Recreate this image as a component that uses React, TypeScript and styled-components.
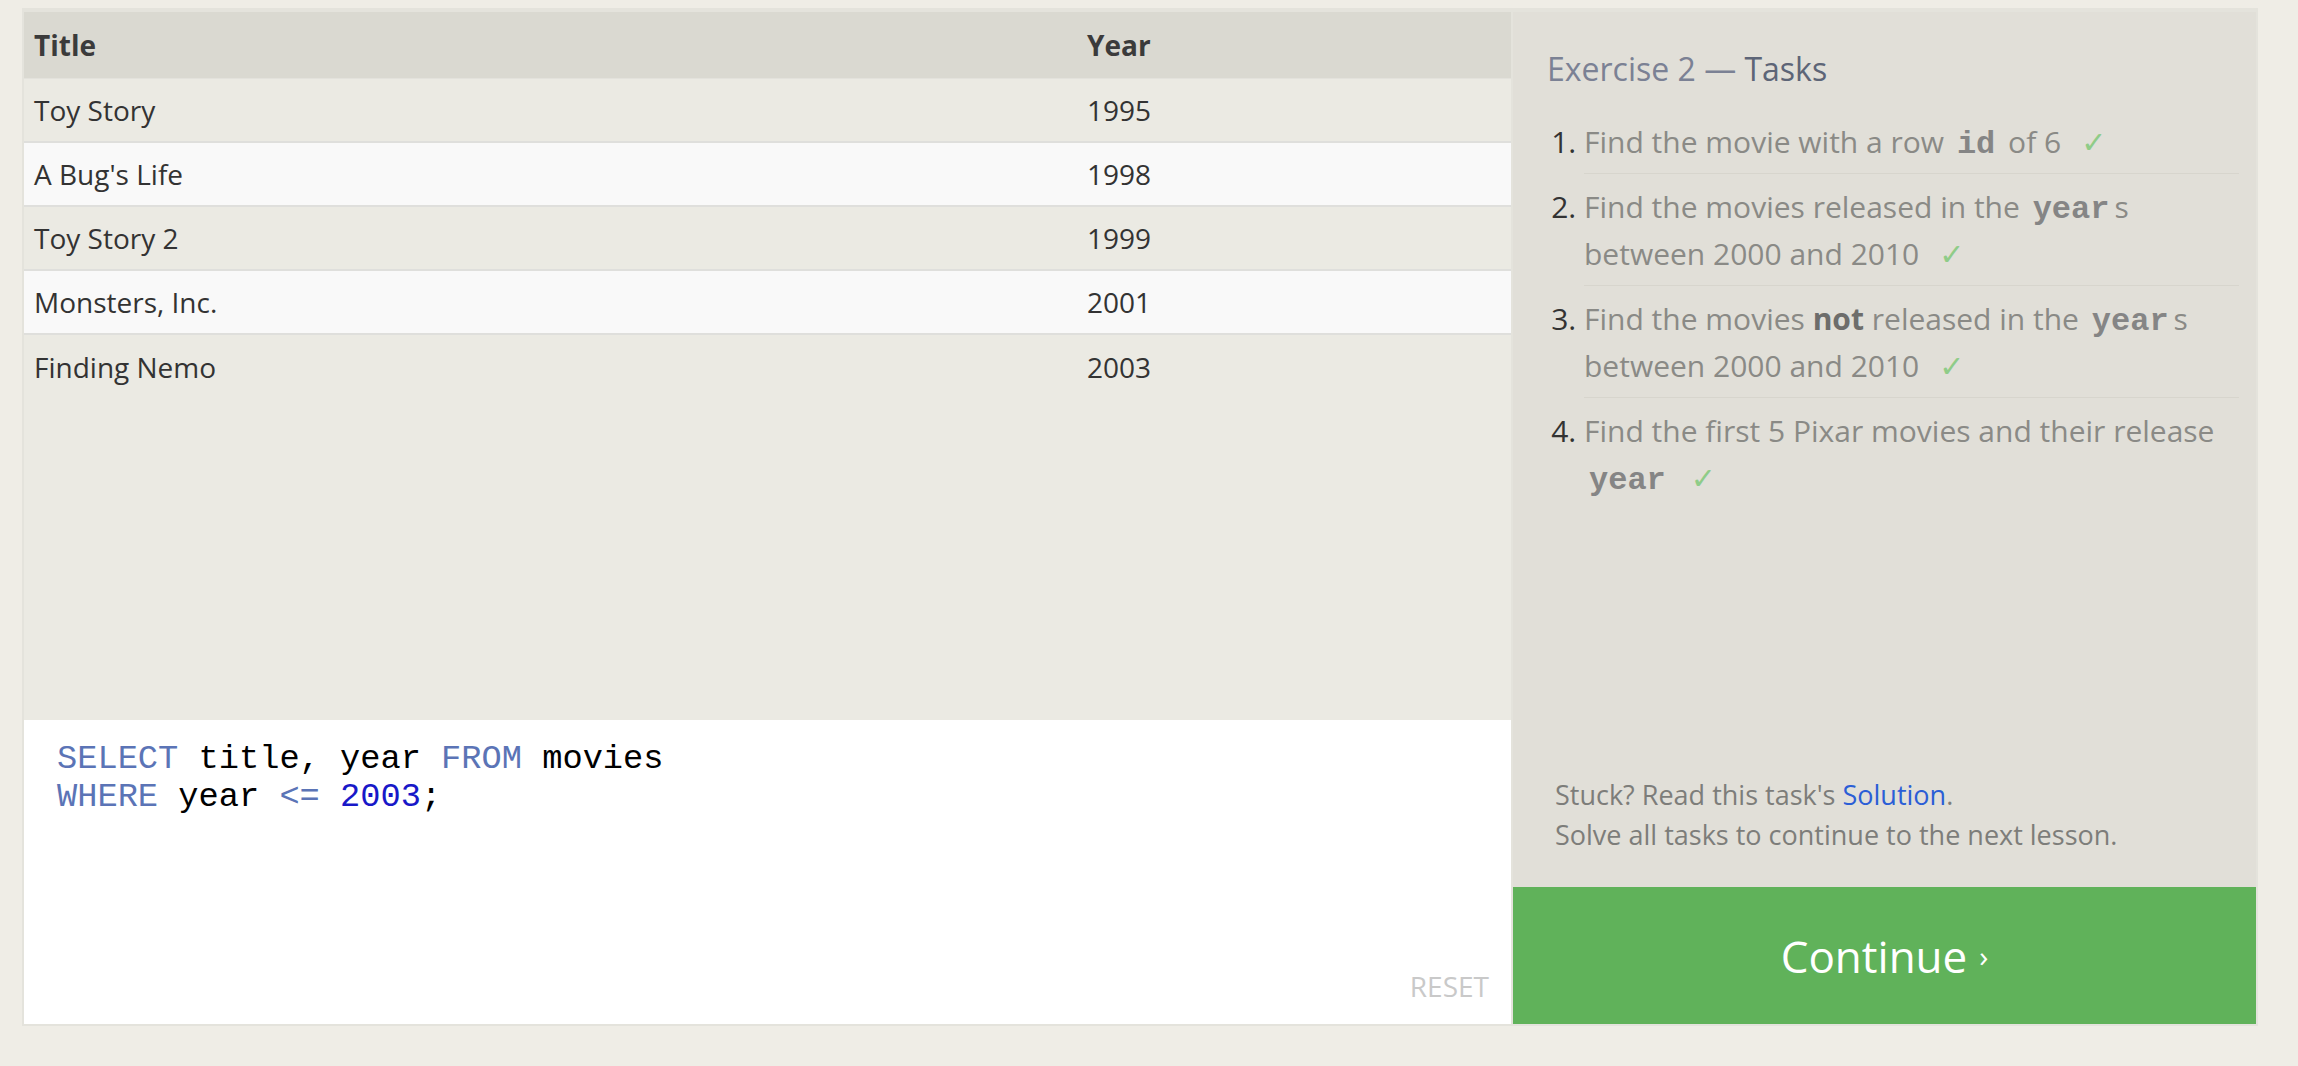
import styled, { createGlobalStyle } from "styled-components";

const GlobalStyle = createGlobalStyle`
  * {
    box-sizing: border-box;
  }
  body {
    margin: 0;
    background: #efede6;
    font-family: "Open Sans", "Liberation Sans", sans-serif;
  }
`;

interface IMovie {
  title: string;
  year: number;
}

const movies: IMovie[] = [
  { title: "Toy Story", year: 1995 },
  { title: "A Bug's Life", year: 1998 },
  { title: "Toy Story 2", year: 1999 },
  { title: "Monsters, Inc.", year: 2001 },
  { title: "Finding Nemo", year: 2003 },
];

const Frame = styled.div`
  margin: 8px 40px 0 22px;
  height: 1018px;
  display: grid;
  grid-template-columns: 1487px 743px;
  gap: 2px;
  border: 2px solid #e4e3dc;
  border-top-width: 4px;
  background: #e4e3dc;
`;

const LeftColumn = styled.div`
  display: grid;
  grid-template-rows: 708px 1fr;
  min-height: 0;
`;

const Results = styled.div`
  background: #ebeae3;
`;

const TableRow = styled.div<{ $head?: boolean; $alt?: boolean }>`
  display: grid;
  grid-template-columns: 1053px 1fr;
  align-items: center;
  height: ${(p) => (p.$head ? "67px" : "64px")};
  background: ${(p) => (p.$head ? "#dad9d1" : p.$alt ? "#f9f9f9" : "#ebeae3")};
  border-bottom: ${(p) => (p.$head ? "1px solid #e3e2dc" : "2px solid #dfdfdc")};
  font-size: 28px;
  font-weight: ${(p) => (p.$head ? 700 : 400)};
  color: ${(p) => (p.$head ? "#3b3b3b" : "#333")};

  &:last-child {
    border-bottom: none;
  }
`;

const Cell = styled.div`
  padding: 0 10px;
  white-space: nowrap;
`;

const Editor = styled.div`
  background: #fff;
  display: flex;
  flex-direction: column;
  padding: 20px 22px 24px 33px;
`;

const Code = styled.pre`
  flex: 1;
  margin: 0;
  font-family: "Liberation Mono", "DejaVu Sans Mono", monospace;
  font-size: 33.7px;
  line-height: 38px;
  color: #000;
`;

const Keyword = styled.span`
  color: #5b74b6;
`;

const Num = styled.span`
  color: #1818c8;
`;

const ResetButton = styled.button`
  align-self: flex-end;
  border: none;
  background: none;
  padding: 0;
  font-family: inherit;
  font-size: 28px;
  line-height: 28px;
  color: #c9c9c9;
`;

const RightColumn = styled.div`
  display: flex;
  flex-direction: column;
  background: #e1dfd8;
  min-height: 0;
`;

const Lesson = styled.div`
  flex: 1;
  display: flex;
  flex-direction: column;
  padding: 35px 17px 0 34px;
`;

const Heading = styled.h2`
  margin: 0;
  font-size: 32px;
  font-weight: 400;
  line-height: 1.4;
  color: #7b8194;

  span {
    color: #5d6577;
  }
`;

const TaskList = styled.ol`
  margin: 17px 0 0;
  padding: 0 0 0 37px;
`;

const Task = styled.li`
  padding: 9px 0 8px;
  border-bottom: 1px solid #d7d5cd;
  font-size: 30px;
  line-height: 47px;
  color: #8a8a86;

  &::marker {
    color: #333;
  }

  &:last-child {
    border-bottom: none;
  }
`;

const InlineCode = styled.code`
  font-family: "Liberation Mono", "DejaVu Sans Mono", monospace;
  font-weight: 700;
  font-size: 32px;
  line-height: 1;
  margin: 0 5px;
  color: #858585;
`;

const Strong = styled.strong`
  color: #6d6d6b;
`;

const Check = styled.span`
  margin-left: 20px;
  font-family: "DejaVu Sans", sans-serif;
  line-height: 1;
  color: #8fcc88;
`;

const Note = styled.p`
  margin: auto 0 0 8px;
  padding-bottom: 32px;
  font-size: 27px;
  line-height: 40px;
  color: #7d7d7a;

  a {
    color: #2b5ed6;
    text-decoration: none;
  }
`;

const ContinueButton = styled.button`
  height: 137px;
  border: none;
  background: #60b25a;
  color: #fff;
  font-family: inherit;
  font-size: 44px;
  display: flex;
  align-items: center;
  justify-content: center;

  span {
    font-size: 30px;
    margin-left: 12px;
  }
`;

function App() {
  return (
    <>
      <GlobalStyle />
      <Frame>
        <LeftColumn>
          <Results>
            <TableRow $head>
              <Cell>Title</Cell>
              <Cell>Year</Cell>
            </TableRow>
            {movies.map((movie, i) => (
              <TableRow key={movie.title} $alt={i % 2 === 1}>
                <Cell>{movie.title}</Cell>
                <Cell>{movie.year}</Cell>
              </TableRow>
            ))}
          </Results>
          <Editor>
            <Code>
              <Keyword>SELECT</Keyword> title, year <Keyword>FROM</Keyword> movies
              {"\n"}
              <Keyword>WHERE</Keyword> year <Keyword>&lt;=</Keyword> <Num>2003</Num>;
            </Code>
            <ResetButton>RESET</ResetButton>
          </Editor>
        </LeftColumn>
        <RightColumn>
          <Lesson>
            <Heading>
              Exercise 2 — <span>Tasks</span>
            </Heading>
            <TaskList>
              <Task>
                <span>Find the movie with a row</span> <InlineCode>id</InlineCode> <span>of 6</span>
                <Check>✓</Check>
              </Task>
              <Task>
                <span>Find the movies released in the</span> <InlineCode>year</InlineCode>
                <span>s</span> <span>between 2000 and 2010</span>
                <Check>✓</Check>
              </Task>
              <Task>
                <span>Find the movies</span> <Strong>not</Strong> <span>released in the</span>{" "}
                <InlineCode>year</InlineCode>
                <span>s</span> <span>between 2000 and 2010</span>
                <Check>✓</Check>
              </Task>
              <Task>
                <span>Find the first 5 Pixar movies and their release</span>{" "}
                <InlineCode>year</InlineCode>
                <Check>✓</Check>
              </Task>
            </TaskList>
            <Note>
              Stuck? Read this task's <a href="#solution">Solution</a>.
              <br />
              Solve all tasks to continue to the next lesson.
            </Note>
          </Lesson>
          <ContinueButton>
            Continue<span>›</span>
          </ContinueButton>
        </RightColumn>
      </Frame>
    </>
  );
}

export default App;
